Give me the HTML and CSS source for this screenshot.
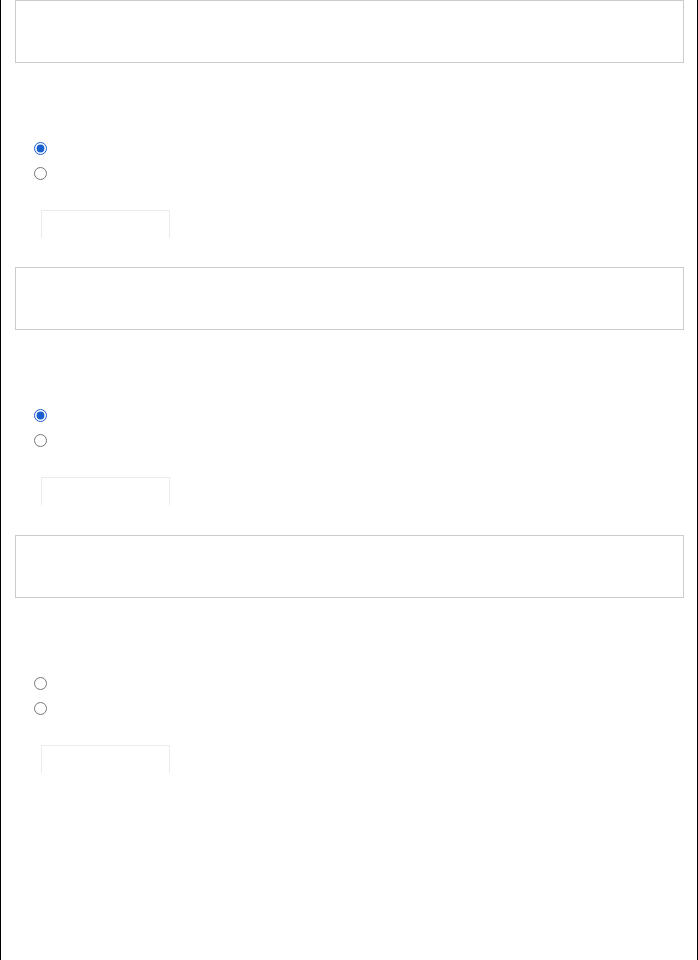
FILE: index.html
```html
<!DOCTYPE html>
<html lang="en">
<head>
  <meta charset="UTF-8" />
  <meta name="viewport" content="width=device-width, initial-scale=1.0" />
  <title>Options</title>
  <link rel="stylesheet" href="styles.css">
</head>
<body>
  <div class="page">
    <div class="section">
      <div class="panel"></div>
      <div class="options">
        <label class="option"><input type="radio" name="q1" checked /></label>
        <label class="option"><input type="radio" name="q1" /></label>
      </div>
      <div class="field"></div>
    </div>

    <div class="section">
      <div class="panel"></div>
      <div class="options">
        <label class="option"><input type="radio" name="q2" checked /></label>
        <label class="option"><input type="radio" name="q2" /></label>
      </div>
      <div class="field"></div>
    </div>

    <div class="section">
      <div class="panel"></div>
      <div class="options">
        <label class="option"><input type="radio" name="q3" /></label>
        <label class="option"><input type="radio" name="q3" /></label>
      </div>
      <div class="field"></div>
    </div>
  </div>
</body>
</html>
```

FILE: styles.css
```css
html, body {
  margin: 0;
  padding: 0;
  background: #fff;
}
body {
  font-family: "Liberation Sans", Arial, sans-serif;
}
.page {
  box-sizing: border-box;
  width: 698px;
  min-height: 960px;
  border-left: 1px solid #000;
  border-right: 1px solid #000;
  padding: 0 13px 0 14px;
}
.section {
  display: flex;
  flex-direction: column;
  height: 267px;
}
.section + .section {
  height: 268px;
}
.panel {
  box-sizing: border-box;
  height: 63px;
  border: 1px solid #ccc;
  flex-shrink: 0;
}
.options {
  display: flex;
  flex-direction: column;
  margin-top: 73px;
  padding-left: 19px;
}
.option {
  display: flex;
  align-items: center;
  height: 25px;
}
.option input {
  margin: 0;
  width: 13px;
  height: 13px;
  accent-color: #1a5fd0;
}
.field {
  box-sizing: border-box;
  margin-top: 24px;
  margin-left: 26px;
  width: 129px;
  height: 28px;
  border: 1px solid #ebebeb;
  border-bottom: none;
}
```
